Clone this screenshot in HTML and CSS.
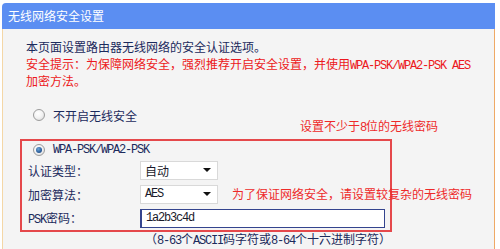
FILE: index.html
```html
<!DOCTYPE html>
<html lang="zh-CN">
<head>
<meta charset="utf-8">
<title>无线网络安全设置</title>
<link rel="stylesheet" href="styles.css">
</head>
<body>
<div class="page">
  <div class="header">无线网络安全设置</div>
  <div class="panel">
    <div class="intro">
      <p class="line">本页面设置路由器无线网络的安全认证选项。</p>
      <p class="line warn">安全提示：为保障网络安全，强烈推荐开启安全设置，并使用<span class="en">WPA-PSK/WPA2-PSK AES</span></p>
      <p class="line warn">加密方法。</p>
    </div>
    <div class="option off">
      <span class="radio"></span>
      <span class="opt-label">不开启无线安全</span>
    </div>
    <div class="mark-box">
      <div class="option on">
        <span class="radio checked"></span>
        <span class="opt-label en">WPA-PSK/WPA2-PSK</span>
      </div>
      <div class="field">
        <span class="label">认证类型：</span>
        <div class="select"><span class="value">自动</span><span class="arrow"></span></div>
      </div>
      <div class="field">
        <span class="label">加密算法：</span>
        <div class="select"><span class="value en">AES</span><span class="arrow"></span></div>
      </div>
      <div class="field">
        <span class="label"><span class="en">PSK</span>密码：</span>
        <div class="input"><span class="en">1a2b3c4d</span></div>
      </div>
    </div>
    <p class="hint">（<span class="en">8-63</span>个<span class="en">ASCII</span>码字符或<span class="en">8-64</span>个十六进制字符）</p>
    <p class="note note-top">设置不少于<span class="en">8</span>位的无线密码</p>
    <p class="note note-mid">为了保证网络安全，请设置较复杂的无线密码</p>
  </div>
</div>
</body>
</html>
```
FILE: styles.css
```css
* { box-sizing: border-box; }
html, body { margin: 0; padding: 0; background: #ffffff; }
body {
  font-family: "Noto Sans CJK SC", "Noto Sans", sans-serif;
  font-size: 12px;
  color: #1b2a5c;
}
p { margin: 0; }
.page {
  margin: 3px 0 0 2px;
  width: 493px;
}
.header {
  height: 26px;
  line-height: 26px;
  padding-left: 6px;
  background: #5b8ef2;
  color: #ffffff;
  border-radius: 4px 0 0 0;
}
.panel {
  position: relative;
  background: #f4f4f4;
  border-left: 1px solid #f4d7a6;
  border-right: 1px solid #efa965;
  height: 230px;
  padding-top: 9px;
}
.intro { margin-left: 23px; }
.line { line-height: 17px; height: 17px; white-space: nowrap; }
.warn { color: #ec1820; }
.en {
  font-family: "Liberation Mono", monospace;
  letter-spacing: -1.2px;
}
.option {
  display: flex;
  align-items: center;
  height: 18px;
}
.option.off { margin: 17px 0 0 30px; }
.option.on { margin-left: 11px; height: 17px; }
.opt-label { margin-left: 8px; }
.radio {
  width: 12px;
  height: 12px;
  border-radius: 50%;
  border: 1px solid #9c9c9c;
  background: radial-gradient(circle at 40% 35%, #ffffff 0%, #f2f2f2 50%, #d2d2d2 100%);
  display: flex;
  align-items: center;
  justify-content: center;
}
.radio.checked::after {
  content: "";
  width: 6px;
  height: 6px;
  border-radius: 50%;
  background: radial-gradient(circle at 40% 35%, #6fa8d8 0%, #2d5f9c 60%, #1c3f74 100%);
}
.mark-box {
  margin: 15px 0 0 17px;
  width: 372px;
  border: 2px solid #e5484b;
}
.field {
  display: flex;
  align-items: center;
  height: 24px;
  padding-left: 6px;
}
.label { width: 112px; }
.select {
  width: 78px;
  height: 19px;
  background: #ffffff;
  border: 1px solid #d9d9d9;
  display: flex;
  align-items: center;
  justify-content: space-between;
  padding: 0 6px 0 4px;
  color: #1a1a2a;
}
.arrow {
  width: 0;
  height: 0;
  border-left: 4px solid transparent;
  border-right: 4px solid transparent;
  border-top: 4px solid #111111;
}
.input {
  width: 245px;
  height: 19px;
  background: #ffffff;
  border: 1px solid #34448e;
  border-left-width: 2px;
  display: flex;
  align-items: center;
  padding-left: 4px;
  color: #1a1a2a;
}
.hint {
  margin: -2px 0 0 142px;
  line-height: 17px;
  white-space: nowrap;
}
.note {
  position: absolute;
  color: #ee2a2a;
  line-height: 16px;
  white-space: nowrap;
}
.note-top { left: 297px; top: 89px; }
.note-mid { left: 229px; top: 157px; }
```
